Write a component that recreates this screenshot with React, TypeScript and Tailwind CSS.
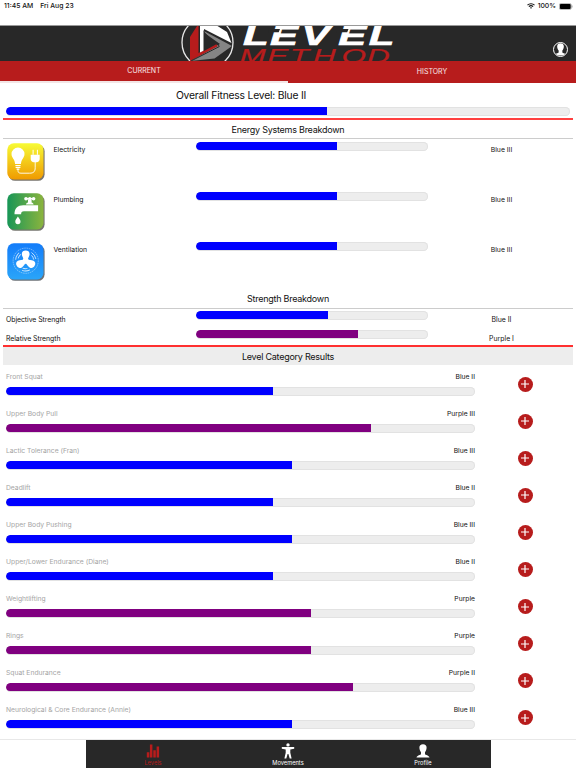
import clsx from "clsx";

type Tone = "blue" | "purple";

const SYSTEMS = [
  { name: "Electricity", level: "Blue III", pct: 60.8, Icon: ElectricityIcon },
  { name: "Plumbing", level: "Blue III", pct: 60.8, Icon: PlumbingIcon },
  { name: "Ventilation", level: "Blue III", pct: 60.8, Icon: VentilationIcon },
];

const STRENGTH: { name: string; level: string; pct: number; tone: Tone }[] = [
  { name: "Objective Strength", level: "Blue II", pct: 57, tone: "blue" },
  { name: "Relative Strength", level: "Purple I", pct: 70, tone: "purple" },
];

const CATEGORIES: { name: string; level: string; pct: number; tone: Tone }[] = [
  { name: "Front Squat", level: "Blue II", pct: 57, tone: "blue" },
  { name: "Upper Body Pull", level: "Purple III", pct: 77.9, tone: "purple" },
  { name: "Lactic Tolerance (Fran)", level: "Blue III", pct: 61, tone: "blue" },
  { name: "Deadlift", level: "Blue II", pct: 57, tone: "blue" },
  { name: "Upper Body Pushing", level: "Blue III", pct: 61, tone: "blue" },
  { name: "Upper/Lower Endurance (Diane)", level: "Blue II", pct: 57, tone: "blue" },
  { name: "Weightlifting", level: "Purple", pct: 65, tone: "purple" },
  { name: "Rings", level: "Purple", pct: 65, tone: "purple" },
  { name: "Squat Endurance", level: "Purple II", pct: 74, tone: "purple" },
  { name: "Neurological & Core Endurance (Annie)", level: "Blue III", pct: 61, tone: "blue" },
];

function Bar({ pct, tone = "blue" }: { pct: number; tone?: Tone }) {
  return (
    <div className="h-[9px] w-full overflow-hidden rounded-full bg-[#ededed] pb-px shadow-[inset_0_0_0_1px_#e2e2e2]">
      <div className={clsx("h-full rounded-l-full", tone === "blue" ? "bg-[#0000ff]" : "bg-[#800080]")} style={{ width: `${pct}%` }} />
    </div>
  );
}

function ElectricityIcon() {
  return (
    <svg viewBox="0 0 38 38" className="size-[38px]">
      <defs>
        <linearGradient id="elec" x1="0" y1="0" x2="0" y2="1">
          <stop offset="0" stopColor="#f7fb35" />
          <stop offset="1" stopColor="#f09a00" />
        </linearGradient>
      </defs>
      <rect x="1.6" y="1.8" width="36" height="36" rx="6.5" fill="#77736c" />
      <rect x="0.3" y="0.3" width="36.2" height="36.2" rx="6.5" fill="url(#elec)" />
      <path d="M11 4.5a6.500 6.500 0 0 0-6.500 6.500c0 2.400 1.300 3.900 2.400 5.800.8 1.400.9 2.500 1.200 4.200h5.800c.3-1.700.4-2.800 1.200-4.200 1.100-1.900 2.400-3.400 2.400-5.800A6.500 6.500 0 0 0 11 4.500z" fill="#fff" />
      <path d="M8.400 22.500h5.200M8.600 24.400h4.800M9.600 26.100h2.800" stroke="#fff" strokeWidth="1.100" />
      <path d="M11 26v1.500c0 2 1 2.700 3 2.700h8.500c4.300 0 5.700-1.800 5.700-5.500V19" fill="none" stroke="#fff" strokeWidth="0.900" />
      <path d="M23.700 11.800h9v4.300c0 1.900-1.400 3.200-3.100 3.200h-2.800c-1.700 0-3.100-1.300-3.100-3.200z" fill="#fff" />
      <path d="M26.100 6.800v5M30.400 6.800v5" stroke="#fff" strokeWidth="1" />
    </svg>
  );
}

function PlumbingIcon() {
  return (
    <svg viewBox="0 0 38 38" className="size-[38px]">
      <defs>
        <linearGradient id="plumb" x1="0" y1="0" x2="1" y2="0">
          <stop offset="0" stopColor="#189657" />
          <stop offset="1" stopColor="#8bb43e" />
        </linearGradient>
      </defs>
      <rect x="1.6" y="1.8" width="36" height="36" rx="6.500" fill="#75756f" />
      <rect x="0.3" y="0.3" width="36.2" height="36.2" rx="6.500" fill="url(#plumb)" />
      <g fill="#fff">
        <path d="M7.500 21.300c0-6.300 3.200-9.100 8.800-9.100h14.800v6H17c-2.200 0-2.900 1-2.900 3.100z" />
        <path d="M19 11.500c.1-1.200.8-1.800 2-2.100V7h3.600v2.400c1.200.3 1.900.9 2 2.100z" />
        <circle cx="19" cy="5.700" r="1.800" />
        <circle cx="22.800" cy="5.700" r="1.800" />
        <circle cx="26.600" cy="5.700" r="1.800" />
        <path d="M19 5h7.600v1.400H19zM10.900 23.600c1.400 2 2.600 3.500 2.600 5a2.600 2.600 0 0 1-5.200 0c0-1.500 1.200-3 2.600-5z" />
      </g>
    </svg>
  );
}

function VentilationIcon() {
  return (
    <svg viewBox="0 0 38 38" className="size-[38px]">
      <defs>
        <linearGradient id="vent" x1="0" y1="0" x2="0" y2="1">
          <stop offset="0" stopColor="#137cfa" />
          <stop offset="1" stopColor="#2aa5f9" />
        </linearGradient>
      </defs>
      <rect x="1.600" y="1.800" width="36" height="36" rx="6.500" fill="#6c7177" />
      <rect x="0.300" y="0.300" width="36.200" height="36.200" rx="6.500" fill="url(#vent)" />
      <circle cx="18.700" cy="17.700" r="12.600" fill="none" stroke="#fff" strokeOpacity="0.650" strokeWidth="0.600" strokeDasharray="1.600 0.700" />
      {[0, 120, 240].map((deg) => (
        <g key={deg} transform={`rotate(${deg} 18.700 17.700)`}>
          <path d="M16.800 18c0-3-2-4.500-2-7 0-2.500 1.700-3.600 3.900-3.600s3.900 1.100 3.900 3.600c0 2.500-2 4-2 7z" fill="#fff" />
          <path d="M24.500 12.300a8 8 0 0 1 2.200 4.300M24.500 9.500a10 10 0 0 1 4.400 6.500" fill="none" stroke="#fff" strokeOpacity="0.800" strokeWidth="0.900" />
        </g>
      ))}
      <circle cx="18.700" cy="17.700" r="3" fill="#fff" />
    </svg>
  );
}

function Logo() {
  return (
    <svg viewBox="0 0 220 35" className="block h-[35px] w-[220px]">
      <circle cx="29.500" cy="16.500" r="25.500" fill="#282828" stroke="#e8e8e8" strokeWidth="1.300" />
      <path d="M12 35V11L19 0h1.500v27L38 18l2 1.500z" fill="#b71c1c" />
      <path d="M22 0h17.500l9.500 6 4.500 11L26 3v21.500L22 26.500z" fill="#fff" />
      <path d="M25 4.500l29 15.500-17.500 12.500-24 2.500L39.500 20z" fill="#858585" />
      <path d="M26.500 7v18L42 18z" fill="#282828" />
      <path d="M26 4.500v20.500l14-7 1.200 2.600L13 35" fill="none" stroke="#282828" strokeWidth="1" />
      <path d="M20.500 28l17.800-9.800 1.200 2L14 33.500z" fill="#b71c1c" />
      <g transform="scale(1.520 1)">
        <text x="42.700 60.500 81.500 105.500 125.500" y="18.500" fontSize="27.500" strokeWidth="0.700" className="fill-white stroke-white font-['Liberation_Sans',sans-serif] font-bold italic">LEVEL</text>
      </g>
      {/* stencil cuts in both E's */}
      <path d="M91 3h11l-1.300 3.200H90zM159.500 3h11l-1.300 3.200h-11z" fill="#282828" />
      <g transform="scale(1.500 1)">
        <text x="41 59.500 74.500 90 109 126" y="37" fontSize="21" strokeWidth="0.250" className="fill-[#b71c1c] stroke-[#b71c1c] font-['Liberation_Sans',sans-serif] italic">METHOD</text>
      </g>
    </svg>
  );
}

function Silhouette({ className }: { className: string }) {
  return (
    <svg viewBox="0 0 14 14" className={className} fill="#fff">
      <path d="M7 .3c2.300 0 3.700 1.300 3.600 3.500-.1 1.900-.7 3.300-1.600 4.400v2c.4.8 4 1 4.500 3.300H.5c.5-2.300 4.100-2.500 4.500-3.300v-2C4.100 7.100 3.500 5.700 3.400 3.800 3.300 1.600 4.700.3 7 .3z" />
    </svg>
  );
}

function StatusBar() {
  return (
    <div className="flex h-[25px] shrink-0 items-start justify-between pt-[1px] pr-[3px] pl-[4px] text-[6.800px] leading-[10px] font-medium">
      <div className="flex gap-[7px]">
        <span>11:45 AM</span>
        <span>Fri Aug 23</span>
      </div>
      <div className="flex items-center gap-[3px]">
        <svg viewBox="0 0 8 6" className="h-[6px] w-[8px]" fill="none" stroke="#111" strokeWidth="1.100">
          <path d="M.5 2.200a5 5 0 0 1 7 0M1.900 3.700a3 3 0 0 1 4.200 0" />
          <path d="M4 5.800 2.900 4.800a1.600 1.600 0 0 1 2.200 0z" fill="#111" stroke="none" />
        </svg>
        <span>100%</span>
        <svg viewBox="0 0 14 7" className="h-[7px] w-[14px]">
          <rect x="0.300" y="0.500" width="12" height="6" rx="1.500" fill="none" stroke="#777" strokeWidth="0.500" />
          <rect x="0.900" y="1" width="10.800" height="5" rx="1" fill="#000" />
          <path d="M13 2.500v2" stroke="#888" strokeWidth="0.800" />
        </svg>
      </div>
    </div>
  );
}

export default function App() {
  return (
    <div className="flex h-[768px] w-[576px] flex-col overflow-hidden bg-white font-[Inter,sans-serif] text-[#111]">
      <StatusBar />

      <header className="grid h-[36px] shrink-0 grid-cols-[178px_220px_1fr] border-t border-[#999] bg-[#282828]">
        <span />
        <Logo />
        <div className="flex justify-end pt-[16px] pr-[8px]">
          <div className="flex size-[15px] items-center justify-center overflow-hidden rounded-full border border-white">
            <Silhouette className="size-[13px]" />
          </div>
        </div>
      </header>

      <nav className="grid h-[22px] shrink-0 grid-cols-2 bg-[#b71c1c] text-center text-[7px] leading-[20px] text-white/90">
        <span className="border-b-2 border-[#f3e5e5]">CURRENT</span>
        <span className="pt-[1px]">HISTORY</span>
      </nav>

      <main className="flex min-h-0 flex-1 flex-col overflow-hidden px-[3px]">
        {/* overall */}
        <section className="h-[37px] shrink-0 border-b-2 border-[#ff4040] px-[3px] pt-[5px]">
          <h1 className="h-[19px] pr-[94px] text-center text-[10.300px] leading-[15px] tracking-[-0.2px]">Overall Fitness Level: Blue II</h1>
          <Bar pct={57} />
        </section>

        {/* energy systems */}
        <h2 className="h-[19px] shrink-0 border-b border-[#ccc] pt-[2px] text-center text-[9px] leading-[16px] tracking-[-0.25px]">Energy Systems Breakdown</h2>
        <div className="flex h-[150px] shrink-0 flex-col pt-[3px]">
          {SYSTEMS.map(({ name, level, pct, Icon }) => (
            <div key={name} className="grid h-[50px] shrink-0 grid-cols-[46px_143px_232px_1fr] pl-[4px] text-[6.800px] leading-[10px]">
              <div className="pt-[1px]"><Icon /></div>
              <span className="pt-[3px] pl-[0.500px]">{name}</span>
              <Bar pct={pct} />
              <span className="pt-[3px] pl-[2px] text-center">{level}</span>
            </div>
          ))}
        </div>

        {/* strength */}
        <h2 className="h-[20px] shrink-0 border-b border-[#ccc] pt-[3px] text-center text-[9px] leading-[14px] tracking-[-0.25px]">Strength Breakdown</h2>
        <div className="h-[38px] shrink-0 border-b-2 border-[#ff3030] pt-[2px]">
          {STRENGTH.map((s) => (
            <div key={s.name} className="grid h-[18.500px] grid-cols-[190px_232px_1fr] pl-[3px] text-[6.900px] leading-[10px]">
              <span className="pt-[4px] tracking-[-0.05px]">{s.name}</span>
              <Bar pct={s.pct} tone={s.tone} />
              <span className="pt-[4px] pl-[2px] text-center">{s.level}</span>
            </div>
          ))}
        </div>

        {/* categories */}
        <h2 className="h-[18px] shrink-0 bg-[#ededed] text-center text-[9px] leading-[19px] tracking-[-0.25px]">Level Category Results</h2>
        <div className="flex flex-col pt-[7px]">
          {CATEGORIES.map((c) => (
            <div key={c.name} className="flex h-[37.060px] shrink-0 pl-[3px] text-[6.750px] leading-[10px]">
              <div className="w-[469px]">
                <div className="flex h-[15px] justify-between">
                  <span className="text-[#a5a5a5]">{c.name}</span>
                  <span>{c.level}</span>
                </div>
                <Bar pct={c.pct} tone={c.tone} />
              </div>
              <button aria-label={`Add ${c.name}`} className="mt-[4.500px] ml-[42.500px] flex size-[15.500px] items-center justify-center rounded-full bg-[#b71c1c]">
                <svg viewBox="0 0 8 8" className="size-[8px]" stroke="#fff" strokeWidth="1.200">
                  <path d="M4 0v8M0 4h8" />
                </svg>
              </button>
            </div>
          ))}
        </div>
      </main>

      <footer className="flex h-[29px] shrink-0 justify-center border-t border-[#e8e8e8]">
        <div className="grid w-[405px] grid-cols-3 bg-[#282828] text-[5.700px] leading-[7px] text-white">
          <div className="flex flex-col items-center pt-[4px] text-[#b71c1c]">
            <svg viewBox="0 0 14 14" className="h-[14px] w-[14px]" fill="currentColor">
              <path d="M.8 8.300h2.500v5.200H.8zM3.900.5h2.500v13H3.900zM7.300 6.300h2.500v7.200H7.300zM10.600 2.500h2.500v11h-2.500z" />
            </svg>
            <span className="mt-[1px]">Levels</span>
          </div>
          <div className="flex flex-col items-center pt-[3px]">
            <svg viewBox="0 0 14 16" className="h-[16px] w-[14px]" fill="#fff">
              <circle cx="7" cy="1.900" r="1.700" />
              <path d="M.8 4h12.400v1.700L9.300 6.500v3.200l1.300 5.800H8.700L7.400 11h-.8l-1.300 4.500H3.400l1.300-5.800V6.500L.8 5.700z" />
            </svg>
            <span>Movements</span>
          </div>
          <div className="flex flex-col items-center pt-[4px]">
            <Silhouette className="size-[14px]" />
            <span className="mt-[1px]">Profile</span>
          </div>
        </div>
      </footer>
    </div>
  );
}
